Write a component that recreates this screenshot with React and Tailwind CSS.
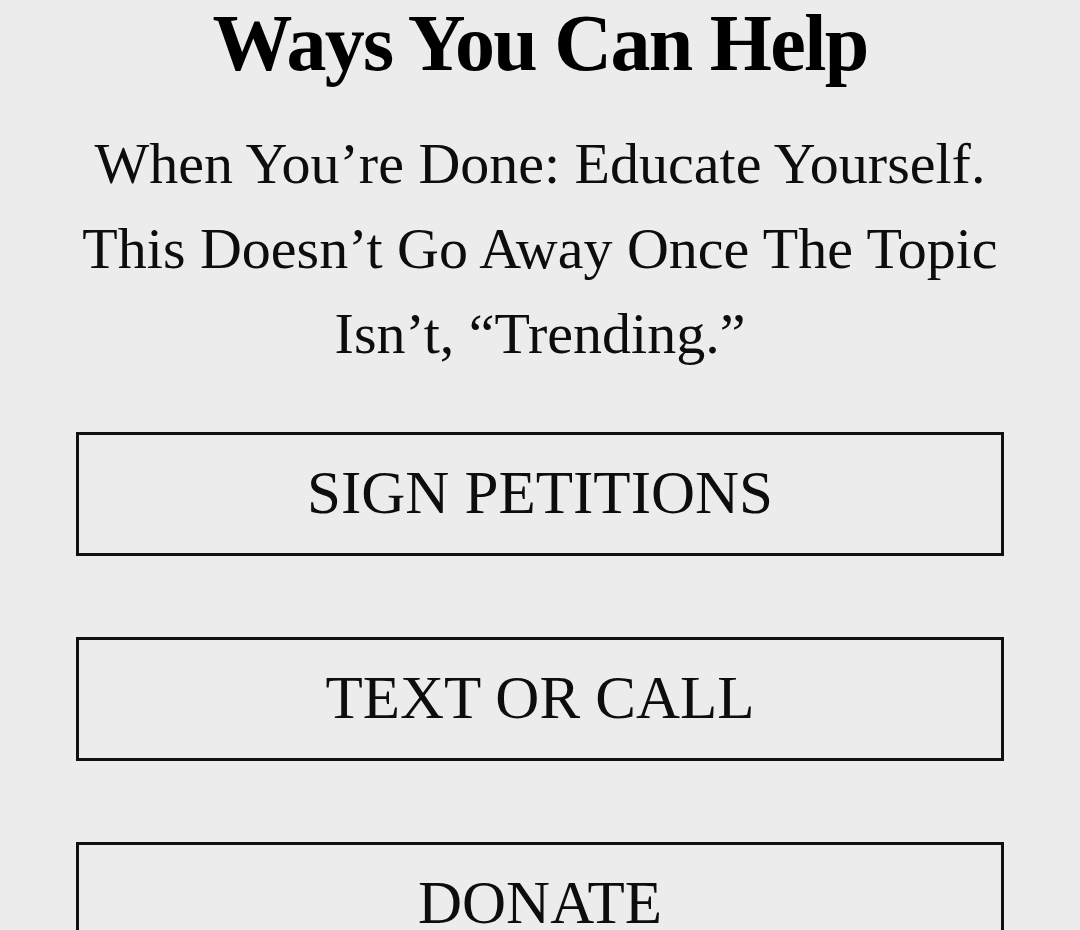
export default function App() {
  const serif = { fontFamily: '"Liberation Serif", "Times New Roman", serif' };
  const buttons = ["SIGN PETITIONS", "TEXT OR CALL", "DONATE"];
  return (
    <div className="w-[1080px] h-[930px] overflow-hidden bg-[#ececec] text-[#0d0d0d]" style={serif}>
      <div className="flex flex-col items-center">
        <h1 className="text-[80px] leading-[86px] font-bold tracking-[-1.7px] text-black">Ways You Can Help</h1>
        <p className="mt-[35px] text-[58px] leading-[85px] text-center w-[980px]">
          When You’re Done: Educate Yourself.
          <br />
          This Doesn’t Go Away Once The Topic
          <br />
          Isn’t, “Trending.”
        </p>
        <div className="mt-[56px] w-[928px] flex flex-col gap-[81px]">
          {buttons.map((b) => (
            <div
              key={b}
              className="h-[124px] border-[3px] border-[#111] flex items-center justify-center pb-[4px] text-[61px] leading-none"
            >
              {b}
            </div>
          ))}
        </div>
      </div>
    </div>
  );
}
